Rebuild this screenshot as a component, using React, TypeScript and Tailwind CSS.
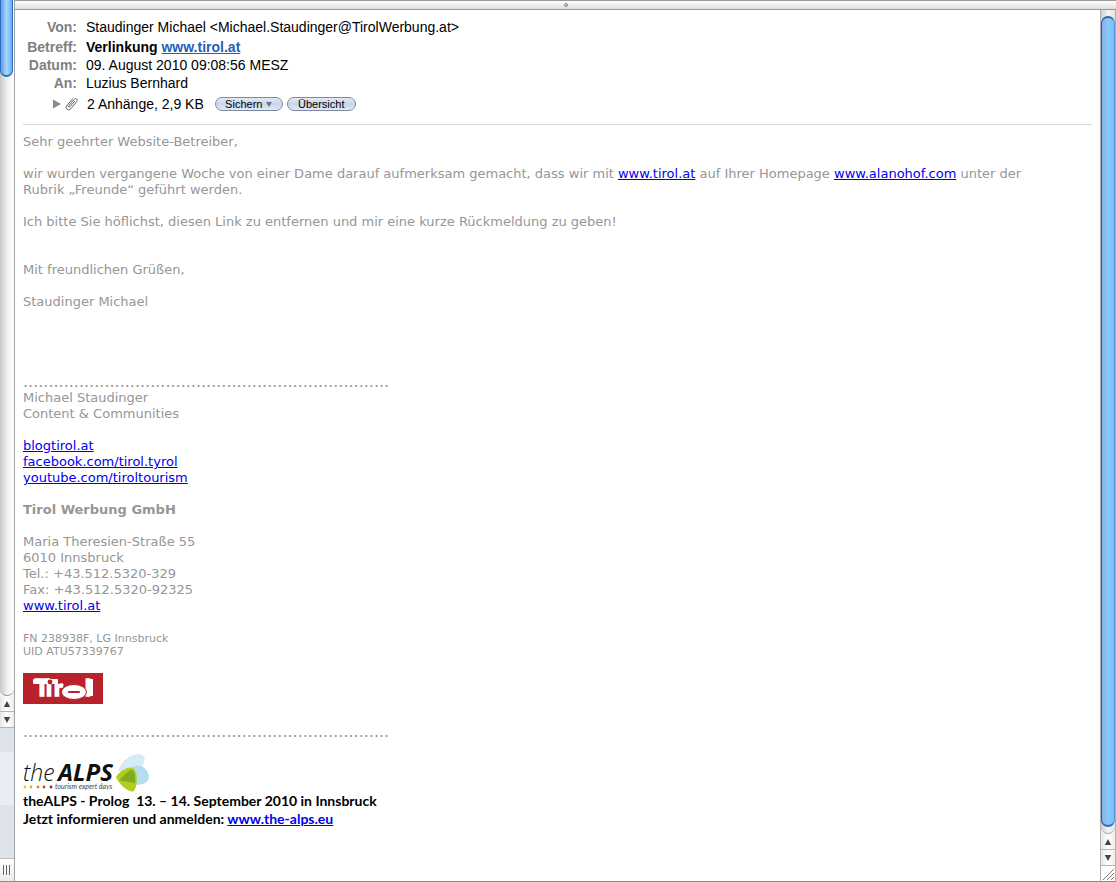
import React from "react";

const DOTS = ".".repeat(72);

function BodyLink({ href, children }: { href: string; children: React.ReactNode }) {
  return (
    <a href={href} className="text-[#0000ee] underline">
      {children}
    </a>
  );
}

function ArrowButton({ direction }: { direction: "up" | "down" }) {
  return (
    <button
      type="button"
      aria-label={direction === "up" ? "Nach oben" : "Nach unten"}
      className="flex h-4 w-full shrink-0 items-center justify-center border-b border-[#b5b5b5] bg-linear-to-r from-[#e6e6e6] via-white to-[#ededed]"
    >
      <svg width="8" height="6" viewBox="0 0 8 6" className="fill-[#444]">
        {direction === "up" ? <polygon points="4,0 7.2,6 0.8,6" /> : <polygon points="0.8,0 7.2,0 4,6" />}
      </svg>
    </button>
  );
}

function LeftPane() {
  return (
    <aside className="flex w-[15px] shrink-0 flex-col border-r border-[#a3a3a3] bg-[#dfe4ec]">
      <div className="flex flex-1 flex-col bg-[#f2f2f2]">
        <div className="flex-1 rounded-b-full border-b border-[#999] bg-linear-to-r from-[#c8c8c8] via-[#f0f0f0] to-white">
          <div className="h-[77px] w-[13px] rounded-b-full border-x border-b-2 border-[#2f6cc4] bg-linear-to-r from-[#5d9de8] via-[#a9d6fb] to-[#62b0f8]" />
        </div>
      </div>
      <ArrowButton direction="up" />
      <ArrowButton direction="down" />
      <div className="h-6 shrink-0" />
      <div className="h-[53px] shrink-0 bg-[#e9edf6]" />
      <div className="h-[53px] shrink-0" />
      <div className="flex h-[23px] shrink-0 items-center justify-center gap-[2px] border-t border-[#bbb] bg-linear-to-b from-white to-[#ececec] pr-[2px]">
        <span className="h-[10px] w-px bg-[#666]" />
        <span className="h-[10px] w-px bg-[#666]" />
        <span className="h-[10px] w-px bg-[#666]" />
      </div>
    </aside>
  );
}

function RightScrollbar() {
  return (
    <div className="flex w-4 shrink-0 flex-col border-x border-[#b0b0b0] bg-[#f2f2f2]">
      <div className="flex flex-1 flex-col rounded-b-full border-b border-[#aaa] bg-linear-to-r from-[#cfcfcf] via-[#f4f4f4] to-[#e4e4e4] pt-[6px] pb-[6px]">
        <div className="w-full flex-1 rounded-full border-t-2 border-r border-b-2 border-l border-t-[#3a5f94] border-r-[#4c94e0] border-b-[#2f6cc4] border-l-[#1f57b8] bg-linear-to-r from-[#86b2ea] via-[#8cc6fa] to-[#74c4fb]" />
      </div>
      <ArrowButton direction="up" />
      <ArrowButton direction="down" />
      <svg viewBox="0 0 14 15" className="h-[15px] w-full shrink-0 bg-white" fill="none" stroke="#777">
        <path d="M2 14 13 3M6 14 13 7M10 14 13 11" />
      </svg>
    </div>
  );
}

function HeaderRow({ label, children }: { label: string; children: React.ReactNode }) {
  return (
    <div className="flex h-[18px] items-center">
      <dt className="mr-[9px] w-[54px] shrink-0 text-right font-bold text-[#808080]">{label}</dt>
      <dd>{children}</dd>
    </div>
  );
}

function TirolLogo() {
  return (
    <svg role="img" aria-label="Tirol" viewBox="0 0 80 31" className="h-[31px] w-20 bg-[#b8232b]">
      <g fontFamily="Lato, sans-serif" fontWeight="900" fontSize="23" fill="#fff" stroke="#fff" strokeWidth="1.4">
        <text x="12" y="23">T</text>
        <text x="23" y="23">i</text>
        <text x="31" y="23">r</text>
        <text x="62" y="23">l</text>
      </g>
      <rect x="10" y="6" width="25" height="5" rx="1" fill="#fff" />
      <circle cx="27" cy="9" r="2.4" fill="#b8232b" />
      <ellipse cx="51" cy="19" rx="12.500" ry="7.500" fill="#fff" stroke="#b8232b" />
      <rect x="45" y="18" width="12" height="2" rx="1" fill="#b8232b" />
      <rect x="64" y="6" width="6" height="17" fill="#fff" />
    </svg>
  );
}

function AlpsLogo() {
  return (
    <svg role="img" aria-label="the ALPS tourism expert days" viewBox="0 0 128 38" className="h-[38px] w-32">
      <path d="M95 17C98 8 106 1 114 0C120 0 123 3 121 8L116 20 105 20Z" fill="#d5ecf7" />
      <path d="M108 14C116 8 124 13 126 22C126 30 116 33 107 29Z" fill="#b5ddf0" />
      <path d="M93 23C97 17 105 12 110 14C115 18 115 31 111 37C106 40 95 29 93 23Z" fill="#b3cc1e" />
      <path d="M98 24 107 16Q113 15 112 29L99 27Q96 27 98 24Z" fill="#7ead22" />
      <text x="0" y="27" fontFamily="Open Sans, sans-serif" fontStyle="italic" fontSize="23" fontWeight="300" fill="#111">the</text>
      <text x="35" y="27" fontFamily="Open Sans, sans-serif" fontStyle="italic" fontSize="24" fontWeight="700" fill="#111">ALPS</text>
      <circle cx="2" cy="33" r="1.4" fill="#e9c91c" />
      <circle cx="8" cy="33" r="1.4" fill="#d8b026" />
      <circle cx="15" cy="33" r="1.4" fill="#c98a22" />
      <circle cx="21" cy="33" r="1.4" fill="#c4403a" />
      <circle cx="28" cy="33" r="1.4" fill="#a51d35" />
      <text x="32" y="35" fontFamily="Lato, sans-serif" fontStyle="italic" fontSize="7" fill="#444">tourism expert days</text>
    </svg>
  );
}

const pill =
  "flex h-[14px] items-center justify-center gap-1 rounded-full border border-[#8088a0] bg-linear-to-b from-[#e4eaf5] via-[#c9d5e8] to-[#e0e9f6] text-[11px] leading-3 text-black";

export default function App() {
  return (
    <div className="flex h-screen flex-col border-b border-[#8a8a8a] bg-white">
      <div className="flex min-h-0 flex-1">
        <LeftPane />
        <div className="flex min-w-0 flex-1 flex-col">
          <div className="flex h-[10px] shrink-0 items-center justify-center border-t border-b border-[#999] bg-linear-to-b from-white to-[#dedede]">
            <span className="size-1 rounded-full border border-[#888] bg-[#ccc]" />
          </div>
          <div className="flex min-h-0 flex-1">
            <main className="min-w-0 flex-1 overflow-hidden px-2 pt-2">
              <header className="border-b border-[#d9d9d9] pb-[11px] font-['Liberation_Sans',sans-serif] text-sm leading-[18px] text-black">
                <dl>
                  <HeaderRow label="Von:">Staudinger Michael &lt;Michael.Staudinger@TirolWerbung.at&gt;</HeaderRow>
                  <div className="h-[2px]" />
                  <HeaderRow label="Betreff:">
                    <span className="font-bold">
                      Verlinkung <a href="http://www.tirol.at" className="text-[#2460b8] underline">www.tirol.at</a>
                    </span>
                  </HeaderRow>
                  <HeaderRow label="Datum:">09. August 2010 09:08:56 MESZ</HeaderRow>
                  <HeaderRow label="An:">Luzius Bernhard</HeaderRow>
                </dl>
                <div className="mt-[3px] flex h-[18px] items-center pl-[30px]">
                  <button type="button" aria-label="Anhänge anzeigen" className="mr-1">
                    <svg width="8" height="10" viewBox="0 0 8 10" fill="#8a8a8a"><polygon points="0,0.5 8,5 0,9.5" /></svg>
                  </button>
                  <svg width="13" height="14" viewBox="0 0 13 14" fill="none" stroke="#666" strokeLinecap="round" className="mr-[9px]">
                    <path d="M9.5 4.500 4.800 9.800C4 10.800 2.800 10 3.600 9L9 2.500C10.500 0.200 13.300 2.300 11.800 4.500L5.800 11.800C3.800 14.300 -0.300 12 1.500 9L7.500 2" />
                  </svg>
                  <span className="mr-[11px]">2 Anhänge, 2,9 KB</span>
                  <button type="button" className={`${pill} mr-1 w-[68px]`}>
                    Sichern
                    <svg width="6" height="5" viewBox="0 0 6 5" fill="#6c7488"><polygon points="0,0 6,0 3,5" /></svg>
                  </button>
                  <button type="button" className={`${pill} w-[69px]`}>Übersicht</button>
                </div>
              </header>
              <article className="pt-[9px] font-['DejaVu_Sans',sans-serif] text-[13px] leading-4 text-[#969696]">
                <p>Sehr geehrter Website-Betreiber,</p>
                <p className="mt-4">
                  wir wurden vergangene Woche von einer Dame darauf aufmerksam gemacht, dass wir mit{" "}
                  <BodyLink href="http://www.tirol.at">www.tirol.at</BodyLink> auf Ihrer Homepage{" "}
                  <BodyLink href="http://www.alanohof.com">www.alanohof.com</BodyLink> unter der
                  <br />
                  Rubrik „Freunde“ geführt werden.
                </p>
                <p className="mt-4">Ich bitte Sie höflichst, diesen Link zu entfernen und mir eine kurze Rückmeldung zu geben!</p>
                <p className="mt-8">Mit freundlichen Grüßen,</p>
                <p className="mt-4">Staudinger Michael</p>
                <p className="mt-16 text-base leading-4">{DOTS}</p>
                <p>Michael Staudinger</p>
                <p>Content &amp; Communities</p>
                <ul className="mt-4">
                  <li><BodyLink href="http://blogtirol.at">blogtirol.at</BodyLink></li>
                  <li><BodyLink href="http://facebook.com/tirol.tyrol">facebook.com/tirol.tyrol</BodyLink></li>
                  <li><BodyLink href="http://youtube.com/tiroltourism">youtube.com/tiroltourism</BodyLink></li>
                </ul>
                <p className="mt-4 font-bold">Tirol Werbung GmbH</p>
                <address className="mt-4 not-italic">
                  <p>Maria Theresien-Straße 55</p>
                  <p>6010 Innsbruck</p>
                  <p>Tel.: +43.512.5320-329</p>
                  <p>Fax: +43.512.5320-92325</p>
                  <BodyLink href="http://www.tirol.at">www.tirol.at</BodyLink>
                </address>
                <div className="mt-[18px] text-[11px] leading-[13px]">
                  <p>FN 238938F, LG Innsbruck</p>
                  <p>UID ATU57339767</p>
                </div>
                <div className="mt-[15px]"><TirolLogo /></div>
                <p className="mt-5 text-base leading-4">{DOTS}</p>
                <div className="mt-[14px]"><AlpsLogo /></div>
                <div className="font-[Lato,sans-serif] text-sm leading-[18px] font-bold text-black">
                  <p>theALPS - Prolog&nbsp; 13. – 14. September 2010 in Innsbruck</p>
                  <p>Jetzt informieren und anmelden: <BodyLink href="http://www.the-alps.eu">www.the-alps.eu</BodyLink></p>
                </div>
              </article>
            </main>
            <RightScrollbar />
          </div>
        </div>
      </div>
    </div>
  );
}
